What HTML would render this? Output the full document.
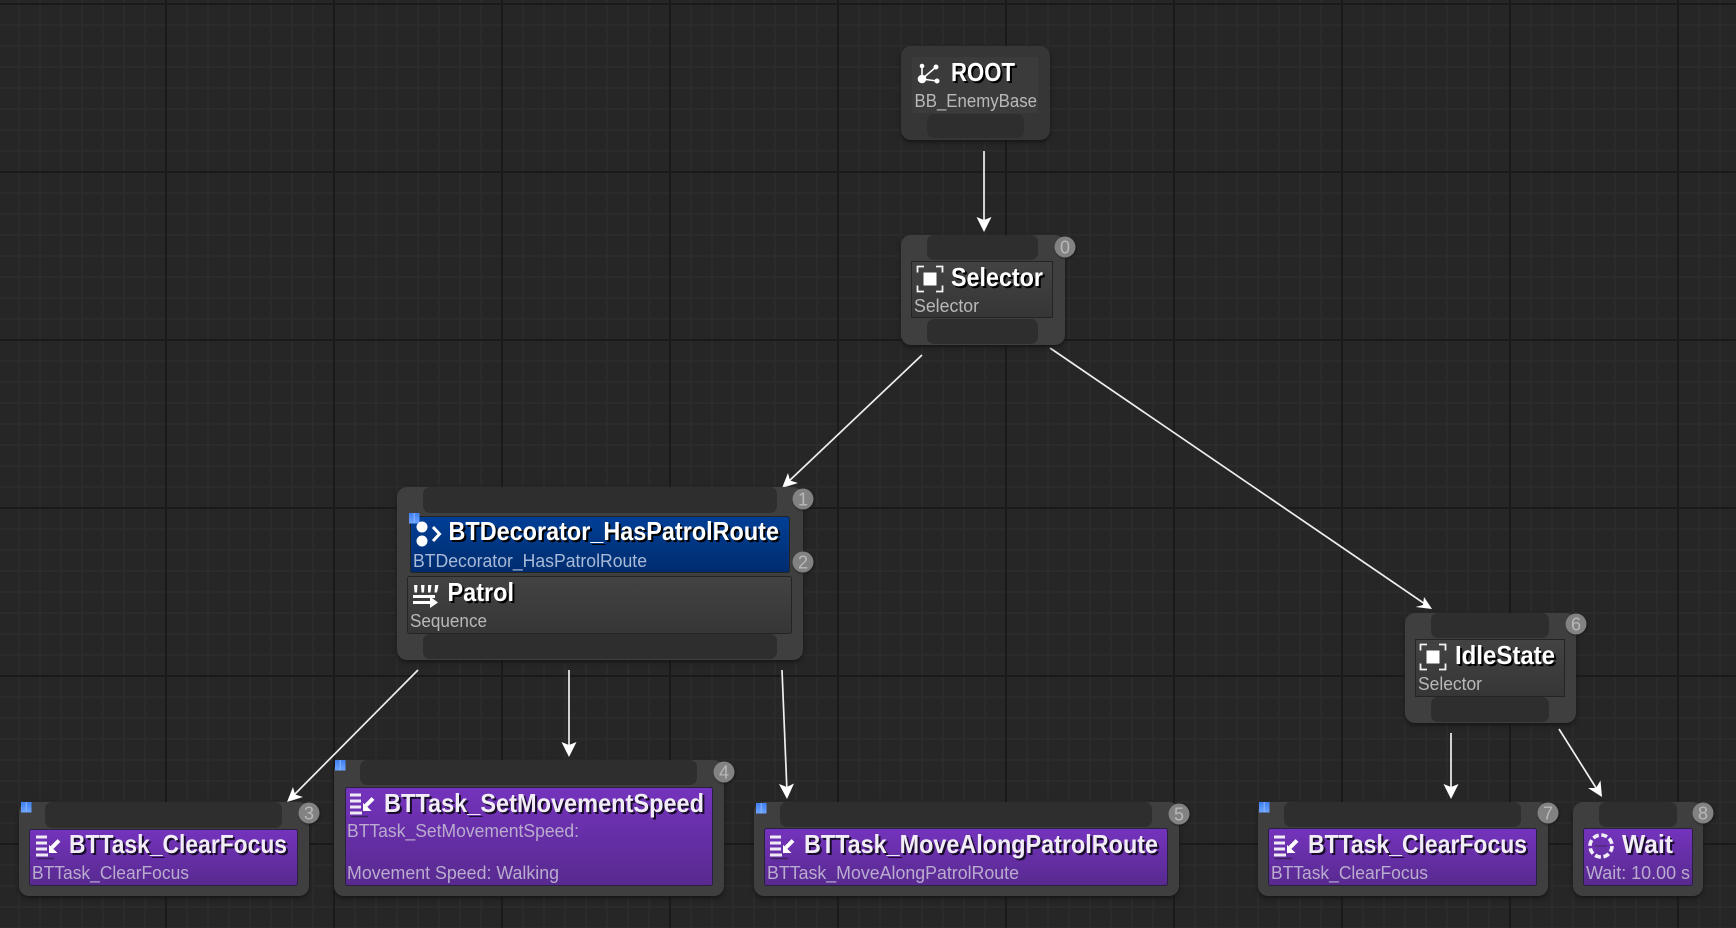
<!DOCTYPE html>
<html lang="en">
<head>
<meta charset="utf-8">
<title>Behavior Tree</title>
<style>
html,body{margin:0;padding:0;width:1736px;height:928px;overflow:hidden;background:#262626}
#g{position:absolute;left:0;top:0;width:1736px;height:928px;background-color:#262626;
background-image:linear-gradient(90deg,#1a1a1a 2px,transparent 2px),linear-gradient(#1a1a1a 2px,transparent 2px),linear-gradient(90deg,#2b2b2b 2px,transparent 2px),linear-gradient(#2b2b2b 2px,transparent 2px);
background-size:168px 168px,168px 168px,21px 21px,21px 21px;
background-position:165px 0,0 3px,18px 0,0 3px}
svg{position:absolute;left:0;top:0}
text{font-family:"Liberation Sans",sans-serif}
.t{font-size:26px;font-weight:bold;fill:#fff;filter:drop-shadow(2px 2px 0 #000)}
.p{fill:#f1ecf6;filter:drop-shadow(2px 2px 0 #1a0c2c)}
.s{font-size:18.5px;fill:#b9b9b9}
.sp{fill:#b9acce}
.sb{fill:#a8bad8}
.b{font-size:18px;fill:#b8b8b8;text-anchor:middle}
.n{fill:#3f3f3f;filter:drop-shadow(0 2px 2px #151515)}
.c{fill:#828282;filter:drop-shadow(1px 1px 1px #1a1a1a)}
.pin{fill:#2e2e2e}
.l{stroke:#efefef;stroke-width:1.7;fill:none}
.a{fill:#fff}
</style>
</head>
<body>
<div id="g"></div>
<svg width="1736" height="928" viewBox="0 0 1736 928" xmlns="http://www.w3.org/2000/svg">
<defs>
<linearGradient id="gp" x1="0" y1="0" x2="0" y2="1"><stop offset="0" stop-color="#7433bd"/><stop offset="1" stop-color="#582a8f"/></linearGradient>
<linearGradient id="gb" x1="0" y1="0" x2="0" y2="1"><stop offset="0" stop-color="#003f96"/><stop offset="1" stop-color="#002c6e"/></linearGradient>
<linearGradient id="gg" x1="0" y1="0" x2="0" y2="1"><stop offset="0" stop-color="#434343"/><stop offset="1" stop-color="#363636"/></linearGradient>
<linearGradient id="gq" x1="0" y1="0" x2="0" y2="1"><stop offset="0" stop-color="#3f7ff0"/><stop offset="1" stop-color="#6da5ff"/></linearGradient>
<g id="sel">
<rect x="-6.500" y="-6.500" width="13" height="13" fill="#fff"/>
<path d="M-12.500-6.500v-6h6.500M6-12.500h6.500v6M12.500 6.500v6H6M-6 12.500h-6.500v-6" fill="none" stroke="#f4f4f4" stroke-width="1.800"/>
</g>
<g id="task">
<path d="M0 2h11M0 8h11M0 14h11M0 20h12" stroke="#efeaf5" stroke-width="3" fill="none"/>
<path d="M1 23.500h17" stroke="#3d2260" stroke-width="1.500"/>
<path d="M23 5.500L16 12.500" stroke="#fff" stroke-width="4"/>
<path d="M13 10v8h8.500l-3-3-2.500-2.500-0-0z" fill="#fff"/>
<path d="M13 10l8 8h-8z" fill="#fff"/>
</g>
<g id="bq"><rect width="10.500" height="10.500" fill="url(#gq)"/><path d="M5.200 0v10.500" stroke="#8fb7ff" stroke-width="1"/></g>
</defs>

<!-- arrows -->
<path class="l" d="M984 151V224"/><path class="a" d="M984 232l-7.500-15 7.500 3 7.500-3z"/>
<path class="l" d="M922 355L788 482"/><path class="a" d="M782 488l6-15 2 7.500 8 2.500z"/>
<path class="l" d="M1050 348L1425 604"/><path class="a" d="M1432 609l-16.500-2 7.500-2 1-8z"/>
<path class="l" d="M418 670L294 795"/><path class="a" d="M287 802l6-15 2 7.500 8 2.500z"/>
<path class="l" d="M569 670V750"/><path class="a" d="M569 757l-7.500-15 7.500 3 7.500-3z"/>
<path class="l" d="M782 670L787 792"/><path class="a" d="M787 799l-8-15 7.800 3 7.200-3.500z"/>
<path class="l" d="M1451 733V792"/><path class="a" d="M1451 799l-7.500-15 7.500 3 7.500-3z"/>
<path class="l" d="M1559 729L1598 791"/><path class="a" d="M1602 797l-14-9 8 0 4.500-7.500z"/>

<!-- ROOT -->
<rect class="n" style="fill:#363636" x="901" y="46" width="149" height="94" rx="10"/>
<rect x="912" y="57" width="126" height="56" fill="#3b3b3b"/>
<rect class="pin" x="927" y="114" width="97" height="24" rx="7"/>
<g stroke="#fff" stroke-width="1.600" fill="#fff"><path d="M922 79V66M922 79L936 67M922 79L937 81" fill="none"/><circle cx="922" cy="79" r="3.500"/><circle cx="922" cy="66" r="1.500"/><circle cx="936" cy="67" r="1.700"/><circle cx="937" cy="81" r="1.700"/></g>
<text class="t" x="951" y="81" textLength="64" lengthAdjust="spacingAndGlyphs">ROOT</text>
<text class="s" x="914.500" y="107" textLength="122.500" lengthAdjust="spacingAndGlyphs">BB_EnemyBase</text>

<!-- Selector -->
<rect class="n" x="901" y="235" width="164" height="110" rx="10"/>
<rect class="pin" x="927" y="235" width="111" height="25" rx="7"/>
<rect class="pin" x="927" y="319" width="111" height="25" rx="7"/>
<rect x="911.500" y="261.500" width="141" height="56" fill="url(#gg)" stroke="#242424"/>
<use href="#sel" x="930" y="279"/>
<text class="t" x="951" y="286" textLength="92" lengthAdjust="spacingAndGlyphs">Selector</text>
<text class="s" x="914" y="312" textLength="65" lengthAdjust="spacingAndGlyphs">Selector</text>
<circle class="c" cx="1065" cy="247" r="10.500"/><text class="b" x="1065" y="253.500">0</text>

<!-- Patrol -->
<rect class="n" x="397" y="487" width="406" height="173" rx="10"/>
<rect class="pin" x="423" y="487" width="354" height="26" rx="7"/>
<rect class="pin" x="423" y="634" width="354" height="25" rx="7"/>
<rect x="410.500" y="516.500" width="379" height="56" rx="2" fill="url(#gb)" stroke="#242424"/>
<use href="#bq" x="409" y="513"/>
<circle cx="422" cy="527" r="5.500" fill="#fff"/><circle cx="422" cy="541" r="5.500" fill="#fff"/>
<path d="M433 527l6.500 7-6.500 7" fill="none" stroke="#fff" stroke-width="3"/>
<text class="t" x="448.500" y="540" textLength="330.500" lengthAdjust="spacingAndGlyphs">BTDecorator_HasPatrolRoute</text>
<text class="s sb" x="413" y="567" textLength="234" lengthAdjust="spacingAndGlyphs">BTDecorator_HasPatrolRoute</text>
<rect x="407.500" y="576.500" width="384" height="57" rx="2" fill="url(#gg)" stroke="#242424"/>
<g fill="#fff"><path d="M414 585h3.500l-0.500 7.500h-2.500zM421 585h3.500l-0.500 7.500h-2.500zM428 585h3.500l-1 7.500h-2.500zM435 585h3.500l-1.500 7.500h-2.500z"/><rect x="413" y="595" width="22" height="3"/><rect x="413" y="601" width="20" height="3"/><path d="M430 596.500l8 6-8 5.500z"/></g>
<text class="t" x="447.500" y="601" textLength="66.500" lengthAdjust="spacingAndGlyphs">Patrol</text>
<text class="s" x="410" y="627" textLength="77" lengthAdjust="spacingAndGlyphs">Sequence</text>
<circle class="c" cx="803" cy="499" r="10.500"/><text class="b" x="803" y="505.500">1</text>
<circle class="c" cx="803" cy="562" r="10.500"/><text class="b" x="803" y="568.500">2</text>

<!-- IdleState -->
<rect class="n" x="1405" y="613" width="171" height="110" rx="10"/>
<rect class="pin" x="1431" y="613" width="118" height="25" rx="7"/>
<rect class="pin" x="1431" y="697" width="118" height="25" rx="7"/>
<rect x="1415.500" y="639.500" width="149" height="57" fill="url(#gg)" stroke="#242424"/>
<use href="#sel" x="1433" y="657"/>
<text class="t" x="1455" y="664" textLength="100" lengthAdjust="spacingAndGlyphs">IdleState</text>
<text class="s" x="1418" y="690" textLength="64" lengthAdjust="spacingAndGlyphs">Selector</text>
<circle class="c" cx="1576" cy="624" r="10.500"/><text class="b" x="1576" y="630.500">6</text>

<!-- ClearFocus 3 -->
<rect class="n" x="19" y="802" width="290" height="94" rx="10"/>
<rect class="pin" x="45" y="802" width="237" height="26" rx="7"/>
<rect x="29.500" y="829.500" width="268" height="56" rx="2" fill="url(#gp)" stroke="#2a2040"/>
<use href="#bq" x="21" y="802"/>
<use href="#task" x="36" y="835"/>
<text class="t p" x="69" y="853" textLength="218" lengthAdjust="spacingAndGlyphs">BTTask_ClearFocus</text>
<text class="s sp" x="32" y="879" textLength="157" lengthAdjust="spacingAndGlyphs">BTTask_ClearFocus</text>
<circle class="c" cx="309" cy="813" r="10.500"/><text class="b" x="309" y="819.500">3</text>

<!-- SetMovementSpeed 4 -->
<rect class="n" x="334" y="760" width="390" height="136" rx="10"/>
<rect class="pin" x="360" y="760" width="337" height="25" rx="7"/>
<rect x="345.500" y="787.500" width="367" height="98" rx="2" fill="url(#gp)" stroke="#2a2040"/>
<use href="#bq" x="335" y="760"/>
<use href="#task" x="350" y="793"/>
<text class="t p" x="384" y="812" textLength="320" lengthAdjust="spacingAndGlyphs">BTTask_SetMovementSpeed</text>
<text class="s sp" x="347" y="837" textLength="232" lengthAdjust="spacingAndGlyphs">BTTask_SetMovementSpeed:</text>
<text class="s sp" x="347" y="879" textLength="212" lengthAdjust="spacingAndGlyphs">Movement Speed: Walking</text>
<circle class="c" cx="724" cy="772" r="10.500"/><text class="b" x="724" y="778.500">4</text>

<!-- MoveAlong 5 -->
<rect class="n" x="754" y="802" width="425" height="94" rx="10"/>
<rect class="pin" x="780" y="802" width="372" height="25" rx="7"/>
<rect x="764.500" y="828.500" width="403" height="57" rx="2" fill="url(#gp)" stroke="#2a2040"/>
<use href="#bq" x="756" y="803"/>
<use href="#task" x="770" y="835"/>
<text class="t p" x="804" y="853" textLength="354" lengthAdjust="spacingAndGlyphs">BTTask_MoveAlongPatrolRoute</text>
<text class="s sp" x="767" y="879" textLength="252" lengthAdjust="spacingAndGlyphs">BTTask_MoveAlongPatrolRoute</text>
<circle class="c" cx="1179" cy="814" r="10.500"/><text class="b" x="1179" y="820.500">5</text>

<!-- ClearFocus 7 -->
<rect class="n" x="1258" y="802" width="290" height="94" rx="10"/>
<rect class="pin" x="1284" y="802" width="237" height="25" rx="7"/>
<rect x="1268.500" y="828.500" width="268" height="57" rx="2" fill="url(#gp)" stroke="#2a2040"/>
<use href="#bq" x="1259" y="802"/>
<use href="#task" x="1274" y="835"/>
<text class="t p" x="1308" y="853" textLength="219" lengthAdjust="spacingAndGlyphs">BTTask_ClearFocus</text>
<text class="s sp" x="1271" y="879" textLength="157" lengthAdjust="spacingAndGlyphs">BTTask_ClearFocus</text>
<circle class="c" cx="1548" cy="813" r="10.500"/><text class="b" x="1548" y="819.500">7</text>

<!-- Wait 8 -->
<rect class="n" x="1573" y="802" width="130" height="94" rx="10"/>
<rect class="pin" x="1599" y="802" width="78" height="25" rx="7"/>
<rect x="1583.500" y="828.500" width="109" height="57" rx="2" fill="url(#gp)" stroke="#2a2040"/>
<circle cx="1601" cy="846" r="11" fill="none" stroke="#f1ecf6" stroke-width="3.600" stroke-dasharray="6 2.640"/>
<path d="M1595 846h12" stroke="#4a2a70" stroke-width="1.200"/>
<text class="t p" x="1622" y="853" textLength="51" lengthAdjust="spacingAndGlyphs">Wait</text>
<text class="s sp" x="1586" y="879" textLength="104" lengthAdjust="spacingAndGlyphs">Wait: 10.00 s</text>
<circle class="c" cx="1703" cy="813" r="10.500"/><text class="b" x="1703" y="819.500">8</text>
</svg>
</body>
</html>
